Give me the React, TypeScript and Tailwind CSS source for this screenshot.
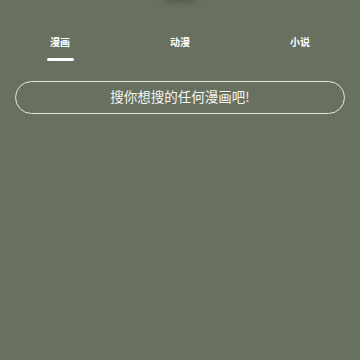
import React, { useState } from 'react';

const tabs = ['漫画', '动漫', '小说'];

const App: React.FC = () => {
  const [active, setActive] = useState(0);

  return (
    <div
      className="relative w-[360px] h-[360px] overflow-hidden bg-[#687060]"
      style={{ fontFamily: '"Noto Sans CJK SC", "Noto Sans", sans-serif' }}
    >
      {/* sombra no topo */}
      <div className="absolute left-[163px] top-[-8px] w-[34px] h-[10px] rounded-full bg-[#3f463a] opacity-50 blur-[3px]"></div>

      <div className="grid grid-cols-3 pt-[34px]">
        {tabs.map((t, i) => (
          <button key={t} onClick={() => setActive(i)} className="flex flex-col items-center">
            <span className="text-[10px] leading-[16px] font-bold text-white">{t}</span>
            <span className={`mt-[8px] w-[27px] h-[3px] rounded-full ${active === i ? 'bg-white' : 'bg-transparent'}`}></span>
          </button>
        ))}
      </div>

      <div className="px-[15px] mt-[20px]">
        <div className="h-[33px] rounded-full border-[1.5px] border-[#e6e6de] flex items-center justify-center">
          <span className="text-[13.5px] text-[#f6f6f2] leading-none -mt-[1px]">搜你想搜的任何漫画吧!</span>
        </div>
      </div>
    </div>
  );
};

export default App;
